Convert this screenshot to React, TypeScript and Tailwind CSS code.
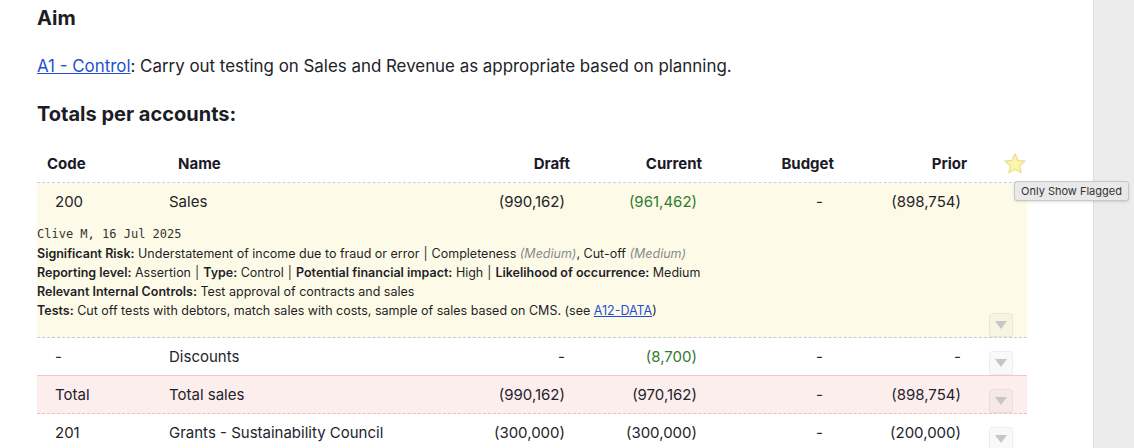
import React from 'react';

type Row = {
  code: string;
  name: string;
  draft: string;
  current: string;
  budget: string;
  prior: string;
  currentGreen?: boolean;
  tone?: 'flagged' | 'total' | 'plain';
  note?: boolean;
};

const rows: Row[] = [
  { code: '200', name: 'Sales', draft: '(990,162)', current: '(961,462)', budget: '-', prior: '(898,754)', currentGreen: true, tone: 'flagged', note: true },
  { code: '-', name: 'Discounts', draft: '-', current: '(8,700)', budget: '-', prior: '-', currentGreen: true, tone: 'plain' },
  { code: 'Total', name: 'Total sales', draft: '(990,162)', current: '(970,162)', budget: '-', prior: '(898,754)', tone: 'total' },
  { code: '201', name: 'Grants - Sustainability Council', draft: '(300,000)', current: '(300,000)', budget: '-', prior: '(200,000)', tone: 'plain' },
];

const cols = 'grid grid-cols-[132px_300px_96px_132px_129px_135px]';

const DropButton: React.FC = () => (
  <div className="ml-[28px] w-[24px] h-[24px] rounded-t-[4px] rounded-b-[2px] bg-black/[0.025] border border-black/[0.05] flex items-center justify-center">
    <svg width="12" height="8" viewBox="0 0 12 8">
      <path d="M0 0 L12 0 L6 8 Z" fill="#c6c6c6" />
    </svg>
  </div>
);

const Star: React.FC = () => (
  <svg width="24" height="24" viewBox="0 0 24 24" className="ml-[42px] -mt-[1px]">
    <path
      d="M12 2 L14.9 8.4 L21.8 9.1 L16.6 13.8 L18.1 20.7 L12 17.2 L5.9 20.7 L7.4 13.8 L2.2 9.1 L9.1 8.4 Z"
      fill="#fcf6a8"
      stroke="#ece19c"
      strokeWidth="1.5"
      strokeLinejoin="round"
    />
  </svg>
);

const Sep = () => <span className="mx-[4px] text-[#333]">|</span>;

const Note: React.FC = () => (
  <div className="pt-[5px] pb-[17px] text-[12.5px] leading-[19px] text-[#1f1f28]">
    <div className="font-['DejaVu_Sans_Mono',monospace] text-[12px] text-[#333]">Clive M, 16 Jul 2025</div>
    <div>
      <b className="font-semibold">Significant Risk:</b> Understatement of income due to fraud or error
      <Sep />Completeness <i className="text-[#8a8a8a]">(Medium)</i>, Cut-off <i className="text-[#8a8a8a]">(Medium)</i>
    </div>
    <div>
      <b className="font-semibold">Reporting level:</b> Assertion<Sep />
      <b className="font-semibold">Type:</b> Control<Sep />
      <b className="font-semibold">Potential financial impact:</b> High<Sep />
      <b className="font-semibold">Likelihood of occurrence:</b> Medium
    </div>
    <div>
      <b className="font-semibold">Relevant Internal Controls:</b> Test approval of contracts and sales
    </div>
    <div>
      <b className="font-semibold">Tests:</b> Cut off tests with debtors, match sales with costs, sample of sales based on CMS. (see{' '}
      <a href="#" className="text-[#1f4fd8] underline">A12-DATA</a>)
    </div>
  </div>
);

const TableRow: React.FC<{ row: Row }> = ({ row }) => {
  const toneClass =
    row.tone === 'flagged'
      ? 'bg-[#fdfbe7] border-b border-dashed border-[#c3cad6]'
      : row.tone === 'total'
      ? 'bg-[#fdeeee] border-b border-dashed border-[#f5bcbc]'
      : row.code === '-'
      ? 'border-b border-[#f3c6c6]'
      : '';
  return (
    <div className={`flex ${toneClass}`}>
      <div className="flex-1">
        <div className={`${cols} h-[37px] pt-[1px] items-center text-[15px] text-[#23232b]`}>
          <div className="pl-[18px]">{row.code}</div>
          <div>{row.name}</div>
          <div className="text-right">{row.draft}</div>
          <div className={`text-right ${row.currentGreen ? 'text-[#2f7a2f]' : ''}`}>{row.current}</div>
          <div className="text-right pr-[3px]">{row.budget}</div>
          <div className="text-right">{row.prior}</div>
        </div>
        {row.note && <Note />}
      </div>
      <div className="w-[66px] flex items-end">
        <DropButton />
      </div>
    </div>
  );
};

const App: React.FC = () => {
  return (
    <div className="relative flex h-[448px] w-[1134px] overflow-hidden bg-white font-['Inter',sans-serif] text-[#1c1c26]">
      <div className="flex-1 pl-[37px] pr-[66px] pt-[4px]">
        <h2 className="text-[20px] leading-[28px] font-bold">Aim</h2>
        <p className="mt-[22px] text-[16.9px] leading-[24px] text-[#22222a]">
          <a href="#" className="text-[#1f4fd8] underline">A1 - Control</a>: Carry out testing on Sales and Revenue as appropriate based on planning.
        </p>
        <h2 className="mt-[22px] text-[20px] leading-[28px] font-bold">Totals per accounts:</h2>

        <div className="mt-[17px] w-[990px]">
          <div className="flex h-[38px] pt-[2px] items-center border-b border-dashed border-[#cbd3da] text-[15px] font-bold text-[#1a1a28]">
            <div className={`${cols} flex-1`}>
              <div className="pl-[10px]">Code</div>
              <div className="pl-[9px]">Name</div>
              <div className="text-right -mr-[5px]">Draft</div>
              <div className="text-right -mr-[5px]">Current</div>
              <div className="text-right -mr-[8px]">Budget</div>
              <div className="text-right -mr-[6px]">Prior</div>
            </div>
            <div className="w-[66px] flex items-center">
              <Star />
            </div>
          </div>
          {rows.map((row) => (
            <TableRow key={row.name} row={row} />
          ))}
        </div>
      </div>
      <div className="w-[41px] bg-[#ececec] border-l border-[#dedede]" />

      <div className="absolute left-[1014px] top-[181px] rounded-[3px] border border-[#c8c8c8] bg-[#e9e9e9] px-[6px] py-[2px] text-[11px] leading-[14px] text-[#333] shadow-sm">
        Only Show Flagged
      </div>
    </div>
  );
};

export default App;
